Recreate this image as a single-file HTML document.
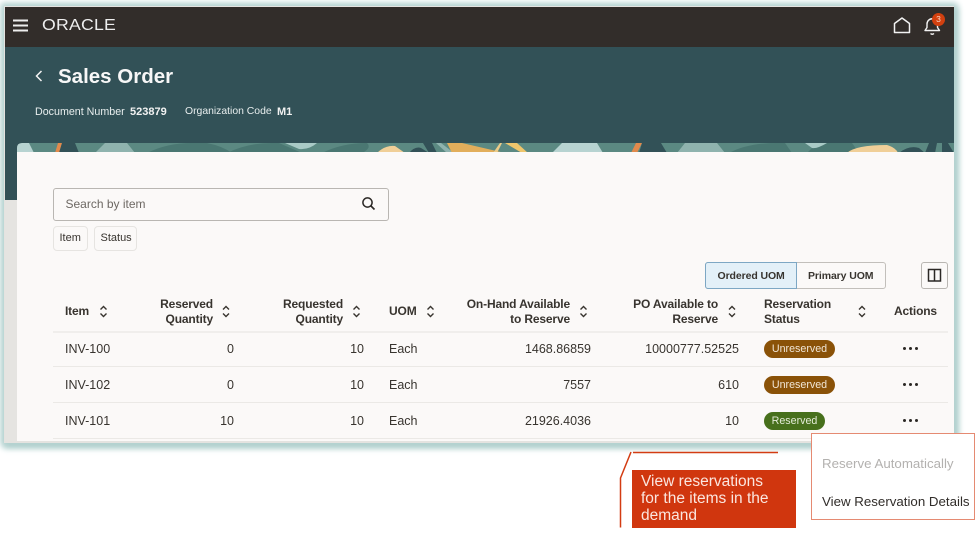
<!DOCTYPE html>
<html><head><meta charset="utf-8"><style>
html,body{margin:0;padding:0;background:#fff}
body{width:978px;height:533px;position:relative;overflow:hidden;font-family:"Liberation Sans",sans-serif;color:#312d2a}
.a{position:absolute;white-space:nowrap}
.t{font-size:12.5px;line-height:15px;color:#38342f}
.h{font-size:12px;line-height:15px;font-weight:bold;color:#38342f;letter-spacing:-.15px}
.r{text-align:right}
.sep{position:absolute;left:53px;width:895px;height:1px;background:#ebe9e6}
.pill{position:absolute;height:18px;border-radius:9px;font-size:10.7px;line-height:18px;text-align:center;color:#f1e6d6}
.dots{position:absolute;left:903px;width:15px;height:3px}
.dots i{position:absolute;top:0;width:3px;height:3px;border-radius:50%;background:#2b2825}
</style></head><body>
<div class="a" style="left:4px;top:6px;width:950px;height:437px;box-shadow:0 0 6px 3px #b5d3d1,2px 3px 6px 2px #a9cbc9;background:#e4e3e0"></div>
<div class="a" style="left:5px;top:7px;width:949px;height:41px;background:#322d2a"></div>
<div class="a" style="left:5px;top:47px;width:949px;height:105px;background:#325157"></div>
<div class="a" style="left:5px;top:152px;width:12px;height:48px;background:#325157"></div>
<div class="a" style="left:5px;top:200px;width:12px;height:241px;background:#e5e4e1"></div>
<svg class="a" style="left:17px;top:143px" width="937" height="10" viewBox="0 0 937 10">
<rect width="937" height="10" fill="#5b8982"/>
<path d="M0 10V3Q0 0 4 0H12L17 10Z" fill="#b7d3d1"/>
<path d="M41 0H45L42 10H38Z" fill="#e18a4c"/>
<path d="M45 0H58L62 10H42Z" fill="#325157"/>
<path d="M78 10L88 0H110L118 10Z" fill="#8fb3ae"/>
<path d="M130 10Q150 0 175 0H190Q205 3 215 10Z" fill="#4a7772"/>
<path d="M210 10Q230 0 255 0H262L285 10Z" fill="#4a7772"/>
<path d="M268 0H300Q292 7 282 6Z" fill="#a9cac6"/>
<path d="M305 10Q325 0 350 0Q355 5 345 10Z" fill="#4a7772"/>
<path d="M360 10Q368 2 378 3L388 10Z" fill="#f0cf98"/>
<path d="M392 10Q398 3 404 5L412 10Z" fill="#325157"/>
<path d="M406 0H415L420 10H412Z" fill="#325157"/>
<path d="M430 10L419 0H424L437 10Z" fill="#8fb3ae"/>
<path d="M430 0H445L488 10H435Z" fill="#e2ae5b"/>
<path d="M476 10L483 0H485L480 10Z" fill="#eccb88"/>
<path d="M488 0H500L511 10H505Z" fill="#efc66c"/>
<path d="M535 10L545 0H580L586 10Z" fill="#b7d3d1"/>
<path d="M619 0H625L620 10H614Z" fill="#e18a4c"/>
<path d="M625 0H644L650 10H622Z" fill="#325157"/>
<path d="M660 10L668 0H700L708 10Z" fill="#8fb3ae"/>
<path d="M712 10Q730 0 760 0H768L775 10Z" fill="#4a7772"/>
<path d="M800 0H835L842 10H790Z" fill="#4a7772"/>
<path d="M788 0H810Q800 6 795 5Z" fill="#a9cac6"/>
<path d="M838 10Q845 0 880 0Q890 3 892 10Z" fill="#f0cf98" transform="translate(-10 2)"/>
<path d="M882 10Q892 2 902 5L908 10Z" fill="#325157"/>
<path d="M912 0H920L918 10H908Z" fill="#325157"/>
<path d="M925 0H931L937 10H925Z" fill="#325157"/>
</svg>
<div class="a" style="left:17px;top:152px;width:937px;height:289px;background:#fbf9f8"></div>
<div class="a" style="left:17px;top:143px;width:5px;height:5px;background:#325157;clip-path:path('M0 0H5Q0 0 0 5Z')"></div>

<svg class="a" style="left:12px;top:19px" width="18" height="14"><path d="M1 1.5H16M1 6.5H16M1 11.5H16" stroke="#eee" stroke-width="2"/></svg>
<div class="a" style="left:41.5px;top:17px;font-size:15.5px;line-height:18px;color:#eee;letter-spacing:.2px;transform:scaleX(1.14);transform-origin:left">ORACLE</div>
<svg class="a" style="left:892px;top:16px" width="20" height="20" fill="none"><path d="M2.5 16.5V7.5L10 2L17.5 7.5V16.5Z" stroke="#f2f2f2" stroke-width="1.5" stroke-linejoin="round"/></svg>
<svg class="a" style="left:923px;top:16px" width="20" height="20" fill="none"><path d="M2 14.5H16.5L14.5 11.5V8A5.2 5.2 0 0 0 4 8V11.5ZM7.5 17.5Q9.2 19 11 17.5" stroke="#f2f2f2" stroke-width="1.4" stroke-linejoin="round"/></svg>
<div class="a" style="left:932px;top:13px;width:13px;height:13px;border-radius:50%;background:#d2400f;color:#f8d5c5;font-size:8.5px;line-height:13px;text-align:center">3</div>

<svg class="a" style="left:34px;top:69px" width="10" height="14" fill="none"><path d="M7.5 2L2.5 7L7.5 12" stroke="#f2f2f2" stroke-width="1.5"/></svg>
<div class="a" style="left:58px;top:64px;font-size:20.5px;line-height:25px;font-weight:bold;color:#f7f7f7">Sales Order</div>
<div class="a" style="left:35px;top:105px;font-size:10.7px;line-height:14px;color:#e8eeee">Document Number</div>
<div class="a" style="left:130px;top:105px;font-size:11px;line-height:14px;font-weight:bold;color:#f2f2f2">523879</div>
<div class="a" style="left:185px;top:105px;font-size:10.4px;line-height:14px;color:#e8eeee">Organization Code</div>
<div class="a" style="left:277px;top:105px;font-size:11px;line-height:14px;font-weight:bold;color:#f2f2f2">M1</div>

<div class="a" style="left:53px;top:188px;width:334px;height:31px;border:1px solid #b9b6b2;border-radius:3px;background:#fbf9f8"></div>
<div class="a" style="left:65.5px;top:196px;font-size:12px;line-height:16px;color:#6d6863">Search by item</div>
<svg class="a" style="left:361px;top:196px" width="15" height="15" fill="none"><circle cx="6.5" cy="6.5" r="4.6" stroke="#2b2825" stroke-width="1.5"/><path d="M10 10L13.5 13.5" stroke="#2b2825" stroke-width="1.6"/></svg>
<div class="a" style="left:53px;top:226px;width:33px;height:23px;border:1px solid #e6e4e1;border-radius:4px"></div>
<div class="a" style="left:94px;top:226px;width:41px;height:23px;border:1px solid #e6e4e1;border-radius:4px"></div>
<div class="a" style="left:59.5px;top:231px;font-size:11px;line-height:14px;color:#38342f">Item</div>
<div class="a" style="left:100.5px;top:231px;font-size:11px;line-height:14px;color:#38342f">Status</div>

<div class="a" style="left:705px;top:262px;width:179px;height:25px;border:1px solid #c2bfbb;border-radius:3px"></div>
<div class="a" style="left:705px;top:262px;width:90px;height:25px;border:1px solid #7da7c4;border-radius:3px 0 0 3px;background:#e3f0f8"></div>
<div class="a" style="left:717.5px;top:269px;font-size:10.5px;line-height:14px;font-weight:bold;color:#38342f;letter-spacing:-.1px">Ordered UOM</div>
<div class="a" style="left:808px;top:269px;font-size:10.5px;line-height:14px;font-weight:bold;color:#38342f;letter-spacing:-.1px">Primary UOM</div>
<div class="a" style="left:921px;top:262px;width:25px;height:25px;border:1px solid #b9b6b2;border-radius:3px"></div>
<svg class="a" style="left:927px;top:268px" width="15" height="15" fill="none"><path d="M1.5 1.5H13.5V13H1.5ZM7.5 1.5V13" stroke="#2b2825" stroke-width="1.5"/></svg>

<div class="a h" style="left:65px;top:304px">Item</div>
<div class="a h r" style="right:765px;top:296.5px;text-align:right">Reserved<br>Quantity</div>
<div class="a h r" style="right:635px;top:296.5px;text-align:right">Requested<br>Quantity</div>
<div class="a h" style="left:389px;top:304px">UOM</div>
<div class="a h r" style="right:408px;top:296.5px;text-align:right">On-Hand Available<br>to Reserve</div>
<div class="a h r" style="right:260px;top:296.5px;text-align:right">PO Available to<br>Reserve</div>
<div class="a h" style="left:764px;top:296.5px">Reservation<br>Status</div>
<div class="a h" style="left:894px;top:304px">Actions</div>

<svg class="a" style="left:0;top:0" width="978" height="533" fill="none" stroke="#38342f" stroke-width="1.4">
<path d="M100.5 309.5L103.5 306.5L106.5 309.5M100.5 313.5L103.5 316.5L106.5 313.5"/>
<path d="M223 309.5L226 306.5L229 309.5M223 313.5L226 316.5L229 313.5"/>
<path d="M353.5 309.5L356.5 306.5L359.5 309.5M353.5 313.5L356.5 316.5L359.5 313.5"/>
<path d="M427.5 309.5L430.5 306.5L433.5 309.5M427.5 313.5L430.5 316.5L433.5 313.5"/>
<path d="M580.5 309.5L583.5 306.5L586.5 309.5M580.5 313.5L583.5 316.5L586.5 313.5"/>
<path d="M729 309.5L732 306.5L735 309.5M729 313.5L732 316.5L735 313.5"/>
<path d="M859 309.5L862 306.5L865 309.5M859 313.5L862 316.5L865 313.5"/>
</svg>

<div class="sep" style="top:331px;height:2px;background:#f0eeec"></div>
<div class="sep" style="top:366px"></div>
<div class="sep" style="top:402px"></div>
<div class="sep" style="top:438px"></div>

<div class="a t" style="left:65px;top:342px">INV-100</div>
<div class="a t" style="right:744px;top:342px">0</div>
<div class="a t" style="right:614px;top:342px">10</div>
<div class="a t" style="left:389px;top:342px">Each</div>
<div class="a t" style="right:387px;top:342px">1468.86859</div>
<div class="a t" style="right:239px;top:342px">10000777.52525</div>
<div class="pill" style="left:764px;top:340px;width:71px;background:#8a5208">Unreserved</div>
<div class="dots" style="top:347px"><i style="left:0"></i><i style="left:6px"></i><i style="left:12px"></i></div>

<div class="a t" style="left:65px;top:378px">INV-102</div>
<div class="a t" style="right:744px;top:378px">0</div>
<div class="a t" style="right:614px;top:378px">10</div>
<div class="a t" style="left:389px;top:378px">Each</div>
<div class="a t" style="right:387px;top:378px">7557</div>
<div class="a t" style="right:239px;top:378px">610</div>
<div class="pill" style="left:764px;top:376px;width:71px;background:#8a5208">Unreserved</div>
<div class="dots" style="top:383px"><i style="left:0"></i><i style="left:6px"></i><i style="left:12px"></i></div>

<div class="a t" style="left:65px;top:414px">INV-101</div>
<div class="a t" style="right:744px;top:414px">10</div>
<div class="a t" style="right:614px;top:414px">10</div>
<div class="a t" style="left:389px;top:414px">Each</div>
<div class="a t" style="right:387px;top:414px">21926.4036</div>
<div class="a t" style="right:239px;top:414px">10</div>
<div class="pill" style="left:764px;top:412px;width:61px;background:#47701c;color:#e4ecd8">Reserved</div>
<div class="dots" style="top:419px"><i style="left:0"></i><i style="left:6px"></i><i style="left:12px"></i></div>

<svg class="a" style="left:0;top:0" width="978" height="533" fill="none" stroke="#d33c12" stroke-width="1.5">
<path d="M633 452.5H778M631 452L620.5 478V527.5"/>
</svg>
<div class="a" style="left:632px;top:470px;width:164px;height:58px;background:#d0360e"></div>
<div class="a" style="left:641px;top:473px;font-size:15.5px;line-height:17px;color:#fbe6df">View reservations<br>for the items in the<br>demand</div>
<div class="a" style="left:811px;top:433px;width:162px;height:85px;background:#fff;border:1px solid #e58a72"></div>
<div class="a" style="left:822px;top:455.5px;font-size:13.3px;line-height:16px;color:#b3b1af">Reserve Automatically</div>
<div class="a" style="left:822px;top:493.5px;font-size:13.3px;line-height:16px;color:#312d2a">View Reservation Details</div>
</body></html>
